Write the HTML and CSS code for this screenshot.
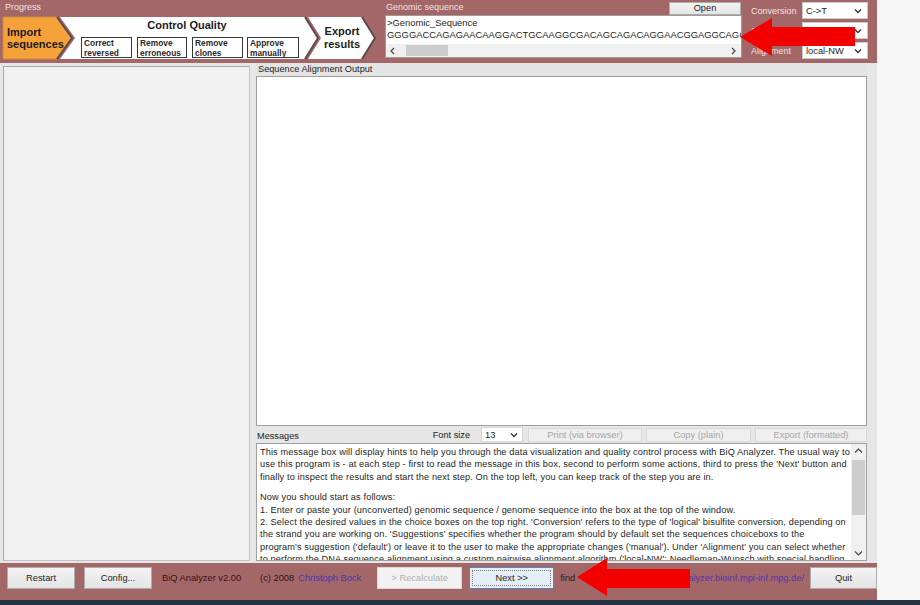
FILE: index.html
```html
<!DOCTYPE html>
<html>
<head>
<meta charset="utf-8">
<title>BiQ Analyzer</title>
<link rel="stylesheet" href="styles.css">
</head>
<body>
<div class="screen">
  <div class="app">
    <header class="top">
      <section class="progress">
        <div class="hlabel">Progress</div>
        <svg class="steps" width="380" height="49" viewBox="0 0 380 49">
          <polygon points="3,3 57,3 72,24 57,45 3,45" fill="#f6a23b" stroke="#c98a3e" stroke-width="1"/>
          <polyline points="57,3 72,24 57,45" fill="none" stroke="#5e4b4b" stroke-width="2"/>
          <polygon points="60,3 305,3 318,24 305,45 60,45 75,24" fill="#ffffff"/>
          <polyline points="305,3 318,24 305,45" fill="none" stroke="#5e4b4b" stroke-width="2"/>
          <polygon points="308,3 362,3 375,24 362,45 308,45 321,24" fill="#ffffff"/>
          <polyline points="362,3 375,24 362,45" fill="none" stroke="#5e4b4b" stroke-width="2"/>
          <text class="big" x="7" y="22">Import</text>
          <text class="big" x="7" y="34">sequences</text>
          <text class="big" x="187" y="15" text-anchor="middle">Control Quality</text>
          <text class="big" x="342" y="21" text-anchor="middle">Export</text>
          <text class="big" x="342" y="34" text-anchor="middle">results</text>
          <rect x="81.5" y="23.5" width="50" height="20" fill="#fff" stroke="#3a3a3a"/>
          <rect x="137.5" y="23.5" width="49" height="20" fill="#fff" stroke="#3a3a3a"/>
          <rect x="192.5" y="23.5" width="50" height="20" fill="#fff" stroke="#3a3a3a"/>
          <rect x="247.5" y="23.5" width="51" height="20" fill="#fff" stroke="#3a3a3a"/>
          <text class="small" x="84" y="31.5">Correct</text>
          <text class="small" x="84" y="41.5">reversed</text>
          <text class="small" x="140" y="31.5">Remove</text>
          <text class="small" x="140" y="41.5">erroneous</text>
          <text class="small" x="195" y="31.5">Remove</text>
          <text class="small" x="195" y="41.5">clones</text>
          <text class="small" x="250" y="31.5">Approve</text>
          <text class="small" x="250" y="41.5">manually</text>
        </svg>
      </section>
      <section class="genomic">
        <div class="genomic-head">
          <span class="hlabel">Genomic sequence</span>
          <button class="btn open">Open</button>
        </div>
        <div class="seqbox">
          <div class="seqtext">&gt;Genomic_Sequence<br>GGGGACCAGAGAACAAGGACTGCAAGGCGACAGCAGACAGGAACGGAGGCAGGCAGGAC</div>
          <div class="hscroll">
            <svg width="8" height="8" viewBox="0 0 8 8"><path d="M5 1 L2 4 L5 7" fill="none" stroke="#444" stroke-width="1.2"/></svg>
            <span class="hthumb"></span>
            <span class="grow"></span>
            <svg width="8" height="8" viewBox="0 0 8 8"><path d="M3 1 L6 4 L3 7" fill="none" stroke="#444" stroke-width="1.2"/></svg>
          </div>
        </div>
      </section>
      <section class="opts">
        <span class="hlabel">Conversion</span>
        <div class="sel"><span>C-&gt;T</span><svg width="8" height="6" viewBox="0 0 8 6"><path d="M1 1.5 L4 4.5 L7 1.5" fill="none" stroke="#333" stroke-width="1.3"/></svg></div>
        <span class="hlabel">Suggestions</span>
        <div class="sel"><span>default</span><svg width="8" height="6" viewBox="0 0 8 6"><path d="M1 1.5 L4 4.5 L7 1.5" fill="none" stroke="#333" stroke-width="1.3"/></svg></div>
        <span class="hlabel">Alignment</span>
        <div class="sel"><span>local-NW</span><svg width="8" height="6" viewBox="0 0 8 6"><path d="M1 1.5 L4 4.5 L7 1.5" fill="none" stroke="#333" stroke-width="1.3"/></svg></div>
      </section>
    </header>

    <main class="body">
      <aside class="leftpanel"></aside>
      <div class="rightcol">
        <div class="sect-label">Sequence Alignment Output</div>
        <div class="output"></div>
        <div class="msgbar">
          <span class="msglabel">Messages</span>
          <span class="fs-label">Font size</span>
          <div class="sel fs"><span>13</span><svg width="8" height="6" viewBox="0 0 8 6"><path d="M1 1.5 L4 4.5 L7 1.5" fill="none" stroke="#333" stroke-width="1.3"/></svg></div>
          <button class="btn dis b-print">Print (via browser)</button>
          <button class="btn dis b-copy">Copy (plain)</button>
          <button class="btn dis b-export">Export (formatted)</button>
        </div>
        <div class="msgbox">
          <div class="msgtext">
            <p>This message box will display hints to help you through the data visualization and quality control process with BiQ Analyzer. The usual way to use this program is - at each step - first to read the message in this box, second to perform some actions, third to press the 'Next' button and finally to inspect the results and start the next step. On the top left, you can keep track of the step you are in.</p>
            <p>Now you should start as follows:<br>1. Enter or paste your (unconverted) genomic sequence / genome sequence into the box at the top of the window.<br>2. Select the desired values in the choice boxes on the top right. 'Conversion' refers to the type of 'logical' bisulfite conversion, depending on the strand you are working on. 'Suggestions' specifies whether the program should by default set the sequences choiceboxs to the <span class="nw">program's suggestion</span> ('default') or leave it to the user to make the appropriate changes ('manual'). Under 'Alignment' you can select whether to perform the DNA sequence alignment using a custom pairwise alignment algorithm ('local-NW': Needleman-Wunsch with special handling of</p>
          </div>
          <div class="vscroll">
            <svg width="9" height="8" viewBox="0 0 9 8"><path d="M1 5.5 L4.5 2 L8 5.5" fill="none" stroke="#444" stroke-width="1.2"/></svg>
            <span class="vthumb"></span>
            <span class="grow"></span>
            <svg width="9" height="8" viewBox="0 0 9 8"><path d="M1 2.5 L4.5 6 L8 2.5" fill="none" stroke="#444" stroke-width="1.2"/></svg>
          </div>
        </div>
      </div>
    </main>

    <footer class="bottom">
      <button class="btn fb b-restart">Restart</button>
      <button class="btn fb b-config">Config...</button>
      <span class="ver">BiQ Analyzer v2.00</span>
      <span class="copy">(c) 2008</span>
      <span class="author">Christoph Bock</span>
      <button class="btn fb dis b-recalc">&gt; Recalculate</button>
      <button class="btn fb focus b-next"><span>Next &gt;&gt;</span></button>
      <span class="find">find</span>
      <span class="linkwrap"><span class="link">http://biq-analyzer.bioinf.mpi-inf.mpg.de/</span></span>
      <button class="btn fb b-quit">Quit</button>
    </footer>
  </div>
  <div class="side"></div>
</div>
<div class="taskbar"></div>

<svg class="arrow arrow-top" width="120" height="44" viewBox="0 0 120 44"><polygon points="2,21 34,2 34,11 117,11 117,30 34,30 34,40" fill="#f20000"/></svg>
<svg class="arrow arrow-bottom" width="118" height="42" viewBox="0 0 118 42"><polygon points="2,21 32,2 32,13 115,13 115,32 32,32 32,40" fill="#f20000"/></svg>
</body>
</html>
```

FILE: styles.css
```css
* { box-sizing: border-box; }
html, body { margin: 0; padding: 0; }
body {
  width: 920px;
  height: 605px;
  overflow: hidden;
  position: relative;
  background: #f6f6f6;
  font-family: "Liberation Sans", Arial, sans-serif;
  font-size: 9.3px;
  color: #1e1e1e;
}
.screen { display: flex; height: 600px; }
.app { width: 877px; display: flex; flex-direction: column; }
.side { flex: 1; background: #f6f6f6; }
.taskbar { height: 5px; background: #253041; }

/* header */
.top {
  height: 63px;
  background: #a46768;
  display: flex;
}
.hlabel { color: #f3e2e2; font-size: 9px; }
.progress { width: 380px; }
.progress .hlabel { display: block; height: 14px; padding: 2px 0 0 5px; }
.steps { display: block; }
.steps .big { font-family: "Liberation Sans", Arial, sans-serif; font-weight: bold; font-size: 11px; fill: #1b1b1b; }
.steps .small { font-family: "Liberation Sans", Arial, sans-serif; font-weight: bold; font-size: 8.4px; fill: #2a2a2a; }

.genomic { width: 357px; margin-left: 5px; display: flex; flex-direction: column; }
.genomic-head { height: 15px; display: flex; align-items: flex-start; justify-content: space-between; }
.genomic-head .hlabel { padding: 2px 0 0 1px; }
.btn {
  font-family: "Liberation Sans", Arial, sans-serif;
  font-size: 9.3px;
  color: #1e1e1e;
  background: linear-gradient(#f3f3f3, #e4e4e4);
  border: 1px solid #adadad;
  padding: 0;
  margin: 0;
}
.open { width: 72px; height: 13px; margin-top: 2px; margin-right: 1px; line-height: 11px; }
.seqbox {
  height: 43px;
  background: #fff;
  border: 1px solid #9c9c9c;
  display: flex;
  flex-direction: column;
  overflow: hidden;
}
.seqtext { flex: 1; padding: 1px 0 0 1px; line-height: 11.5px; white-space: nowrap; overflow: hidden; font-size: 9.4px; }
.hscroll { height: 13px; background: #f0f0f0; display: flex; align-items: center; padding: 0 4px 0 3px; }
.hthumb { width: 42px; height: 11px; background: #cdcdcd; margin-left: 9px; }
.grow { flex: 1; }

.opts {
  margin-left: 9px;
  padding-top: 2px;
  display: grid;
  grid-template-columns: 51px 66px;
  grid-auto-rows: 17px;
  row-gap: 3px;
  align-items: center;
}
.sel {
  height: 17px;
  background: #fff;
  border: 1px solid #c9c9c9;
  display: flex;
  align-items: center;
  justify-content: space-between;
  padding: 0 5px 0 3px;
  font-size: 9.3px;
}
.sel svg { flex: none; }

/* main */
.body {
  height: 500px;
  background: #e6e6e6;
  display: flex;
  padding: 0 10px 0 3px;
  gap: 6px;
}
.leftpanel {
  width: 247px;
  margin: 3px 0 2px;
  background: #f0f0f0;
  border: 1px solid #a9a9a9;
  border-right-color: #c4c4c4;
  border-bottom-color: #c4c4c4;
}
.rightcol { flex: 1; display: flex; flex-direction: column; }
.sect-label { height: 13px; padding: 1px 0 0 2px; font-size: 9.2px; background: #e4e4e4; }
.output { height: 350px; background: #fff; border: 1px solid #a0a0a0; }
.msgbar { height: 17px; display: flex; align-items: center; }
.msglabel { flex: 1; padding: 3px 0 0 1px; font-size: 9.2px; }
.fs-label { margin-right: 11px; font-size: 9.2px; }
.sel.fs { width: 42px; height: 15px; border-color: #d6d6d6; padding: 0 4px 0 3px; }
.btn.dis { color: #a6a6a6; background: #efefef; border-color: #d9d9d9; height: 14px; line-height: 12px; }
.b-print { width: 114px; margin-left: 5px; }
.b-copy { width: 105px; margin-left: 4px; }
.b-export { width: 112px; margin-left: 4px; }
.msgbox {
  height: 118px;
  background: #fff;
  border: 1px solid #a0a0a0;
  display: flex;
  overflow: hidden;
}
.msgtext { flex: 1; padding: 2px 1px 0 3px; font-size: 9.2px; letter-spacing: 0.12px; line-height: 12.3px; overflow: hidden; }
.msgtext p { margin: 0 0 8.5px; }
.nw { white-space: nowrap; }
.vscroll { width: 15px; background: #f0f0f0; display: flex; flex-direction: column; align-items: center; padding: 3px 0 3px; }
.vthumb { width: 13px; height: 55px; background: #cdcdcd; margin-top: 5px; }

/* footer */
.bottom {
  height: 37px;
  background: #a46768;
  display: flex;
  align-items: flex-start;
  padding: 4px 0 0 7px;
  white-space: nowrap;
}
.btn.fb { height: 22px; }
.b-restart { width: 68px; }
.b-config { width: 68px; margin-left: 9px; }
.ver, .copy, .author, .find, .linkwrap { line-height: 22px; height: 22px; }
.ver { margin-left: 10px; color: #3d1212; }
.copy { margin-left: 19px; color: #2a1515; }
.author { margin-left: 4px; color: #4636b0; }
.btn.fb.dis { width: 85px; height: 22px; margin-left: 16px; background: #f2f2f2; border-color: #d8d8d8; color: #b0b0b0; line-height: 20px; }
.b-next {
  width: 85px;
  margin-left: 7px;
  background: #e3eef9;
  border: 1px solid #4f86c6;
  padding: 2px;
}
.b-next span { display: block; height: 16px; line-height: 14px; border: 1px dotted #7b7b7b; }
.find { margin-left: 6px; color: #1e1e1e; }
.linkwrap { flex: 1; display: flex; justify-content: flex-end; }
.link { color: #5336a8; }
.b-quit { width: 67px; margin-left: 6px; }

/* annotation arrows drawn over the screenshot */
.arrow { position: absolute; }
.arrow-top { left: 738px; top: 16px; }
.arrow-bottom { left: 575px; top: 556px; }
```
